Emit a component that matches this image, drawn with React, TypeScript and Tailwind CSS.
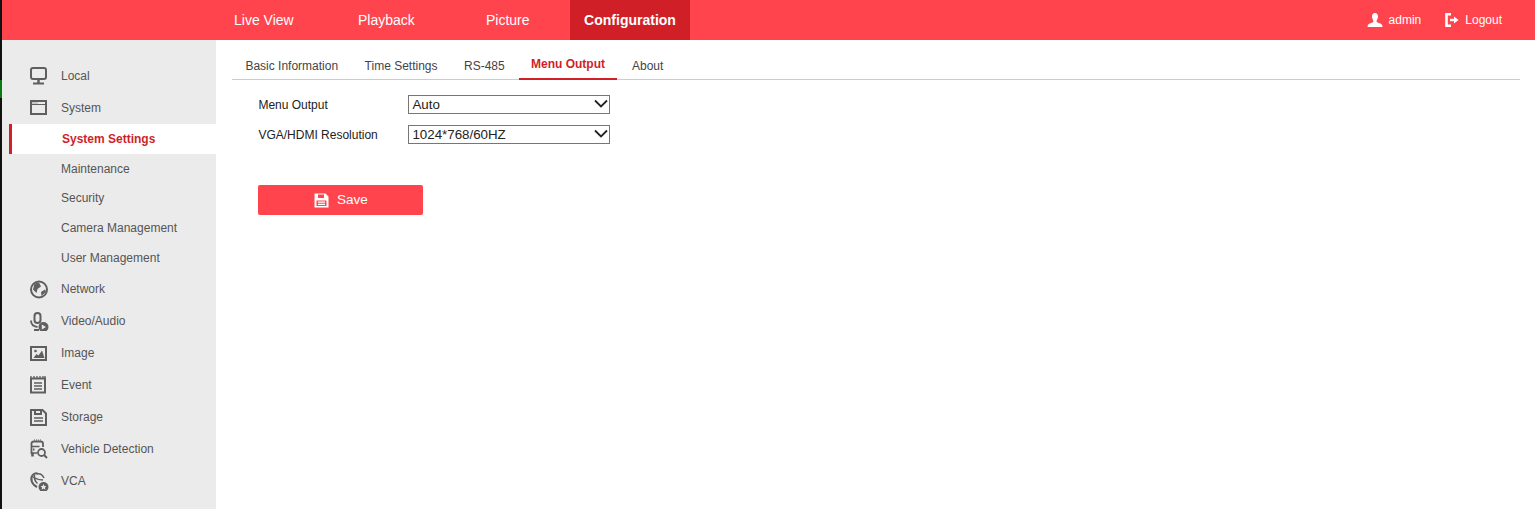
import { ReactNode } from 'react';

const Icon = ({ children }: { children: ReactNode }) => (
  <svg width="20" height="20" viewBox="0 0 20 20" className="shrink-0 text-[#5f5f5f]" fill="none" stroke="currentColor" strokeWidth="2">
    {children}
  </svg>
);

const icons: Record<string, ReactNode> = {
  Local: (
    <>
      <rect x="2" y="2" width="15" height="11" rx="2" />
      <path d="M9.500 14v3" strokeWidth="2.500" />
      <path d="M4 17.500h11" />
    </>
  ),
  System: (
    <>
      <rect x="2" y="3" width="15" height="13" />
      <path d="M2 6.500h15" strokeWidth="1" />
      <path d="M3.500 5h6" strokeWidth="1" strokeDasharray="1 1" />
    </>
  ),
  Network: (
    <>
      <circle cx="10" cy="10.500" r="8" />
      <path d="M5.500 4.500l4.500-1 2 4-3.500 2.500-1 4-3.500-3.500zM12 13l4-2.500 1 2-4.500 4.500z" fill="currentColor" stroke="none" />
    </>
  ),
  'Video/Audio': (
    <>
      <rect x="5.500" y="2" width="6" height="10" rx="3" strokeWidth="2" />
      <path d="M2 9.500c0 4 3 6 6.500 6.500M5 19h5" strokeWidth="1.800" />
      <circle cx="14.500" cy="16" r="5" fill="currentColor" stroke="none" />
      <path d="M12.800 13.500l4.200 2.500-4.200 2.500z" fill="#ebebeb" stroke="none" />
    </>
  ),
  Image: (
    <>
      <rect x="2" y="4" width="15" height="13" strokeWidth="2" />
      <path d="M4.500 15l3-4 2 1.500L13 7.500l2.500 7.500z" fill="currentColor" stroke="none" />
      <circle cx="6.500" cy="8" r="1.300" fill="currentColor" stroke="none" />
    </>
  ),
  Event: (
    <>
      <rect x="2" y="3.500" width="14" height="14" strokeWidth="2" />
      <path d="M2 1v3M5 1v3M8 1v3M11 1v3M14 1v3M16 1v3" strokeWidth="1.300" />
      <path d="M5 8h8M5 11h8M5 14h8" strokeWidth="1.500" />
    </>
  ),
  Storage: (
    <>
      <path d="M2 3h11.500L17 6.500V18H2z" strokeWidth="2" />
      <path d="M6 3v4h6V3" strokeWidth="2" />
      <path d="M5 11h9M5 14h9" strokeWidth="1.600" />
    </>
  ),
  'Vehicle Detection': (
    <>
      <path d="M2.500 15V4.500Q2.500 2.500 5 2.500h6.500q2.500 0 2.500 2V8" strokeWidth="1.800" />
      <path d="M5 1h7" strokeWidth="1.200" strokeDasharray="1 1" />
      <path d="M3 7.500h7.500M3 14h5" strokeWidth="1.600" />
      <path d="M4 10.500h1.500" strokeWidth="2" />
      <path d="M3.500 14v3.500" strokeWidth="2.600" />
      <circle cx="12.500" cy="13.500" r="3.500" strokeWidth="1.800" />
      <path d="M15 16l3 3" strokeWidth="2" />
    </>
  ),
  VCA: (
    <>
      <path d="M8.500 2.500C4 1.500 1.200 6 2.800 10.500c.9 2.500 2.700 4.300 5.200 5.500" strokeWidth="2" />
      <path d="M5.500 4C5 7.500 6 10.500 8.500 12.500M4 6c3 2 6 2.800 10 3M7.500 3c3.500-1 6 .5 7.500 4" strokeWidth="1.500" />
      <circle cx="14.500" cy="16" r="5" fill="currentColor" stroke="none" />
      <path d="M14.500 13l.9 2 2.100.2-1.600 1.400.5 2.100-1.900-1.100-1.900 1.100.5-2.100-1.600-1.400 2.100-.2z" fill="#ebebeb" stroke="none" />
    </>
  ),
};

const MenuItem = ({ name }: { name: string }) => (
  <div className="flex h-8 items-center pl-[27px]">
    <Icon>{icons[name]}</Icon>
    <span className="ml-[12px]">{name}</span>
  </div>
);

const Chevron = () => (
  <svg className="pointer-events-none absolute right-[1px] top-[4px]" width="16" height="10" viewBox="0 0 16 10" fill="none" stroke="#222" strokeWidth="1.800">
    <path d="M2 1.500L8 7.500l6-6" />
  </svg>
);

const App = () => {
  return (
    <div className="flex h-[509px] w-[1535px] overflow-hidden bg-white font-['Liberation_Sans',Arial,sans-serif] text-xs text-[#333]">
      <div className="flex w-[2px] shrink-0 flex-col bg-[#111]">
        <div className="mt-[80px] h-[18px] bg-[#0b7a12]" />
      </div>

      <div className="flex min-w-0 flex-1 flex-col">
        <header className="flex h-10 shrink-0 items-center bg-[#ff444d] text-white">
          <nav className="ml-[214px] flex h-full items-center text-sm">
            <a className="flex h-full w-[108px] items-center pl-[18px]">Live View</a>
            <a className="flex h-full w-[128px] items-center pl-[34px]">Playback</a>
            <a className="flex h-full w-[118px] items-center pl-[34px]">Picture</a>
            <a className="flex h-full w-[120px] items-center justify-center bg-[#d01f27] font-bold">Configuration</a>
          </nav>
          <div className="ml-auto flex items-center pr-[33px]">
            <svg width="16" height="14" viewBox="0 0 16 14" fill="currentColor">
              <path d="M5 3.500C5 1.500 6.200 0 8 0s3 1.500 3 3.500S9.800 7.500 9.500 8c0 1 1 1.500 3 2.200 2 .6 3 1.300 3 3.800H.5c0-2.500 1-3.200 3-3.800 2-.7 3-1.200 3-2.200C6.200 7.500 5 5.500 5 3.500z" />
            </svg>
            <span className="ml-[6px]">admin</span>
            <svg className="ml-[24px]" width="14" height="14" viewBox="0 0 14 14" fill="none" stroke="currentColor">
              <path d="M6 1.200H1.500v11.600H6" strokeWidth="2.600" />
              <path d="M5 7h5" strokeWidth="2.400" />
              <path d="M9 3.500L13.500 7 9 10.500z" fill="currentColor" stroke="none" />
            </svg>
            <span className="ml-[6px]">Logout</span>
          </div>
        </header>

        <div className="flex min-h-0 flex-1">
          <aside className="w-[214px] shrink-0 bg-[#ebebeb] pt-[20px] text-[#555]">
            <MenuItem name="Local" />
            <MenuItem name="System" />
            <div className="ml-[7px] flex h-[30px] items-center border-l-[3px] border-[#d01f27] bg-white pl-[50px] font-bold text-[#d01f27]">
              System Settings
            </div>
            <div className="flex h-[30px] items-center pl-[59px]">Maintenance</div>
            <div className="flex h-[28.800px] items-center pl-[59px]">Security</div>
            <div className="flex h-[30px] items-center pl-[59px]">Camera Management</div>
            <div className="flex h-[30px] items-center pl-[59px]">User Management</div>
            <MenuItem name="Network" />
            <MenuItem name="Video/Audio" />
            <MenuItem name="Image" />
            <MenuItem name="Event" />
            <MenuItem name="Storage" />
            <MenuItem name="Vehicle Detection" />
            <MenuItem name="VCA" />
          </aside>

          <main className="min-w-0 flex-1 pl-4 pr-[15px]">
            <div className="mt-[11px] flex h-[29px] border-b border-[#ccc] text-[#444]">
              <a className="flex w-[119px] items-center pt-[2px] pl-[13.400px]">Basic Information</a>
              <a className="flex w-[99px] items-center pt-[2px] pl-[13.600px]">Time Settings</a>
              <a className="flex w-[69px] items-center pt-[2px] pl-[14px]">RS-485</a>
              <a className="-mb-px flex h-[29px] w-[98px] items-center justify-center border-b-2 border-[#d01f27] pb-[1px] font-bold text-[#d01f27]">
                Menu Output
              </a>
              <a className="flex items-center pt-[2px] pl-[15px]">About</a>
            </div>

            <div className="mt-[15px] ml-[26.400px] flex h-[19px] items-center text-[#222]">
              <span className="w-[150px]">Menu Output</span>
              <div className="relative h-[19px] w-[202px]">
                <select className="h-full w-full appearance-none border border-[#767676] pl-[3px] text-[13.333px] text-[#222]">
                  <option>Auto</option>
                </select>
                <Chevron />
              </div>
            </div>
            <div className="mt-[11px] ml-[26.400px] flex h-[19px] items-center text-[#222]">
              <span className="w-[150px]">VGA/HDMI Resolution</span>
              <div className="relative h-[19px] w-[202px]">
                <select className="h-full w-full appearance-none border border-[#767676] pl-[3px] text-[13.333px] text-[#222]">
                  <option>1024*768/60HZ</option>
                </select>
                <Chevron />
              </div>
            </div>

            <button className="mt-[41px] ml-[26.400px] flex h-[30px] w-[165px] items-center justify-center rounded-[2px] bg-[#ff444d] text-[13.500px] text-white">
              <svg width="15" height="15" viewBox="0 0 15 15">
                <path
                  fillRule="evenodd"
                  fill="currentColor"
                  d="M0.500 0.500H11.500L14.500 3.500V14.500H0.500ZM4 1.500V5H10V1.500ZM2.500 7.500V13H12.500V7.500Z"
                />
                <path d="M4 9.200h7M4 11.300h7" stroke="currentColor" strokeWidth="1.200" />
              </svg>
              <span className="ml-2">Save</span>
            </button>
          </main>
        </div>
      </div>
    </div>
  );
};

export default App;
